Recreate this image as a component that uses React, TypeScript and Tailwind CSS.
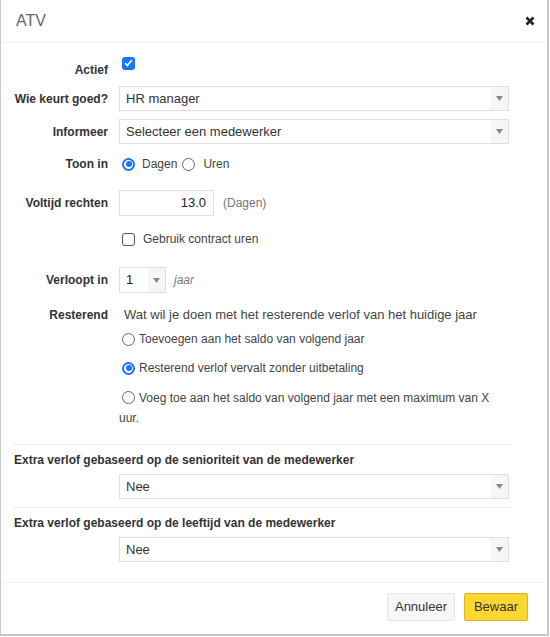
import React from "react";

const font = { fontFamily: '"Liberation Sans", Arial, sans-serif' };

function Caret() {
  return (
    <span className="flex h-full w-[17px] items-center justify-center bg-[#f7f6f6]">
      <svg width="7" height="5" viewBox="0 0 7 5">
        <path d="M0 0h7L3.5 5z" fill="#888" />
      </svg>
    </span>
  );
}

function Select({ value, className = "" }: { value: string; className?: string }) {
  return (
    <div className={`flex h-[25px] items-center justify-between border border-[#e3dede] bg-white pl-[6px] text-[13px] text-[#333] ${className}`}>
      <span>{value}</span>
      <Caret />
    </div>
  );
}

function Checkbox({ checked }: { checked?: boolean }) {
  if (checked) {
    return (
      <span className="flex h-[13px] w-[13px] items-center justify-center rounded-[3px] bg-[#1877f2]">
        <svg width="9" height="8" viewBox="0 0 9 8">
          <path d="M1 4.2 3.4 6.5 8 1" stroke="#fff" strokeWidth="1.8" fill="none" />
        </svg>
      </span>
    );
  }
  return <span className="block h-[13px] w-[13px] rounded-[3px] border border-[#555] bg-white" />;
}

function Radio({ checked }: { checked?: boolean }) {
  if (checked) {
    return (
      <span className="flex h-[13px] w-[13px] items-center justify-center rounded-full border-2 border-[#1877f2] bg-white">
        <span className="block h-[6px] w-[6px] rounded-full bg-[#1877f2]" />
      </span>
    );
  }
  return <span className="block h-[13px] w-[13px] rounded-full border border-[#666] bg-white" />;
}

function Row({ label, children, className = "" }: { label: string; children: React.ReactNode; className?: string }) {
  return (
    <div className={`flex items-center ${className}`}>
      <div className="w-[107px] shrink-0 text-right text-[12px] font-bold text-[#333]">{label}</div>
      <div className="ml-[11px] flex flex-1 items-center pr-[38px]">{children}</div>
    </div>
  );
}

export default function App() {
  return (
    <div style={font} className="h-[637px] w-[550px] bg-white">
      <div className="flex h-[636px] w-[549px] flex-col border-b-2 border-l border-r-2 border-[#c8c8c8] bg-white">
        <div className="flex h-[43px] items-center justify-between border-b border-[#f2f2f2] pl-[15px] pr-[12px]">
          <span className="text-[16px] text-[#666]">ATV</span>
          <svg width="10" height="10" viewBox="0 0 10 10">
            <path d="M1.5 1.5l7 7M8.5 1.5l-7 7" stroke="#222" strokeWidth="2.6" />
          </svg>
        </div>

        <div className="flex-1">
          <Row label="Actief" className="mt-[13px] h-[28px]">
            <span className="ml-[3px] -mt-[14px]">
              <Checkbox checked />
            </span>
          </Row>

          <Row label="Wie keurt goed?" className="mt-[2px]">
            <Select value="HR manager" className="flex-1" />
          </Row>

          <Row label="Informeer" className="mt-[8px]">
            <Select value="Selecteer een medewerker" className="flex-1" />
          </Row>

          <Row label="Toon in" className="mt-[8px] h-[24px]">
            <span className="ml-[3px]"><Radio checked /></span>
            <span className="ml-[7px] text-[12px] text-[#444]">Dagen</span>
            <span className="ml-[5px]"><Radio /></span>
            <span className="ml-[8px] text-[12px] text-[#444]">Uren</span>
          </Row>

          <Row label="Voltijd rechten" className="mt-[14px]">
            <div className="flex h-[26px] w-[95px] items-center justify-end border border-[#e3dede] pr-[7px] text-[13px] text-[#222]">
              13.0
            </div>
            <span className="ml-[9px] text-[12px] text-[#777]">(Dagen)</span>
          </Row>

          <Row label="" className="mt-[11px] h-[24px]">
            <span className="ml-[3px]"><Checkbox /></span>
            <span className="ml-[8px] text-[12px] text-[#444]">Gebruik contract uren</span>
          </Row>

          <Row label="Verloopt in" className="mt-[16px]">
            <div className="flex h-[26px] w-[47px] items-center justify-between border border-[#e3dede] pl-[6px] text-[13px] text-[#222]">
              <span>1</span>
              <Caret />
            </div>
            <span className="ml-[8px] text-[12px] italic text-[#777]">jaar</span>
          </Row>

          <div className="mt-[13px] flex items-start">
            <div className="w-[107px] shrink-0 text-right text-[12px] font-bold leading-[18px] text-[#333]">Resterend</div>
            <div className="ml-[11px] flex-1 pr-[50px]">
              <div className="pl-[5px] text-[13px] leading-[18px] text-[#444]">
                Wat wil je doen met het resterende verlof van het huidige jaar
              </div>
              <div className="mt-[6px] flex h-[18px] items-center pl-[3px] text-[12px] text-[#444]">
                <Radio />
                <span className="ml-[4px]">Toevoegen aan het saldo van volgend jaar</span>
              </div>
              <div className="mt-[11px] flex h-[18px] items-center pl-[3px] text-[12px] text-[#444]">
                <Radio checked />
                <span className="ml-[4px]">Resterend verlof vervalt zonder uitbetaling</span>
              </div>
              <div className="mt-[11px] text-[12px] leading-[20px] text-[#444]">
                <span className="ml-[3px] mr-[4px] inline-block align-[-2px]"><Radio /></span>
                Voeg toe aan het saldo van volgend jaar met een maximum van X uur.
              </div>
            </div>
          </div>

          <div className="ml-[12px] mr-[36px] mt-[16px] border-t border-[#eee]" />
          <div className="mt-[6px] pl-[13px] text-[12px] font-bold leading-[18px] text-[#333]">
            Extra verlof gebaseerd op de senioriteit van de medewerker
          </div>
          <div className="mt-[5px] pl-[118px] pr-[38px]">
            <Select value="Nee" />
          </div>

          <div className="ml-[12px] mr-[36px] mt-[8px] border-t border-[#eee]" />
          <div className="mt-[6px] pl-[13px] text-[12px] font-bold leading-[18px] text-[#333]">
            Extra verlof gebaseerd op de leeftijd van de medewerker
          </div>
          <div className="mt-[5px] pl-[118px] pr-[38px]">
            <Select value="Nee" />
          </div>
        </div>

        <div className="flex h-[52px] items-start justify-end gap-[9px] border-t border-[#f2f2f2] pr-[19px] pt-[10px]">
          <button className="h-[28px] w-[68px] rounded-[2px] border border-[#e6e6e6] bg-[#f7f7f7] text-[13px] text-[#333]">
            Annuleer
          </button>
          <button className="h-[28px] w-[64px] rounded-[2px] border border-[#e0b416] bg-[#fdd835] text-[13px] text-[#333]">
            Bewaar
          </button>
        </div>
      </div>
    </div>
  );
}
